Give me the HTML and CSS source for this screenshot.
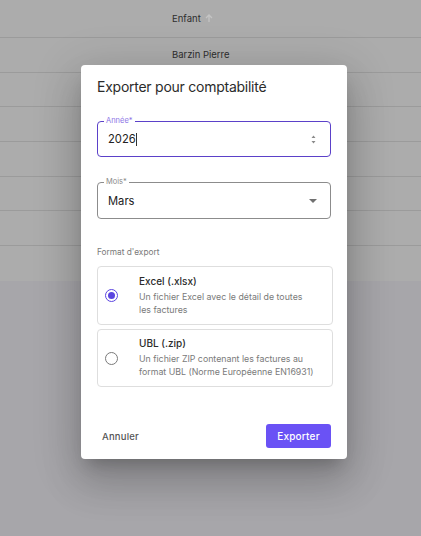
FILE: index.html
```html
<!DOCTYPE html>
<html lang="fr">
<head>
<meta charset="utf-8">
<title>Exporter</title>
<link rel="stylesheet" href="styles.css">
</head>
<body>
<div class="page">
  <div class="table">
    <div class="row head"><span>Enfant</span><svg class="sort" width="8" height="9" viewBox="0 0 8 9"><path d="M4 1 L4 8 M1 4 L4 1 L7 4" stroke="#c4c4c4" stroke-width="1.3" fill="none"/></svg></div>
    <div class="row"><span>Barzin Pierre</span></div>
    <div class="row"></div>
    <div class="row"></div>
    <div class="row"></div>
    <div class="row"></div>
    <div class="row"></div>
    <div class="row last"></div>
  </div>
</div>

<div class="modal">
  <h2 class="title">Exporter pour comptabilité</h2>

  <div class="field focused">
    <span class="flabel">Année*</span>
    <span class="value">2026<i class="caret"></i></span>
    <svg class="spin" width="5" height="9" viewBox="0 0 5 9"><path d="M2.5 0.5 L4.5 3 L0.5 3 Z M2.5 8.5 L4.5 6 L0.5 6 Z" fill="#8a8a8a"/></svg>
  </div>

  <div class="field select">
    <span class="flabel">Mois*</span>
    <span class="value">Mars</span>
    <svg class="drop" width="8" height="4" viewBox="0 0 8 4"><path d="M0 0 L8 0 L4 4 Z" fill="#707070"/></svg>
  </div>

  <div class="section">Format d'export</div>

  <div class="options">
    <div class="option">
      <span class="radio checked"><i></i></span>
      <div class="otext">
        <div class="otitle">Excel (.xlsx)</div>
        <div class="odesc">Un fichier Excel avec le détail de toutes<br>les factures</div>
      </div>
    </div>
    <div class="option">
      <span class="radio"></span>
      <div class="otext">
        <div class="otitle">UBL (.zip)</div>
        <div class="odesc">Un fichier ZIP contenant les factures au<br>format UBL (Norme Européenne EN16931)</div>
      </div>
    </div>
  </div>

  <div class="footer">
    <button class="btn-text">Annuler</button>
    <button class="btn-primary">Exporter</button>
  </div>
</div>
</body>
</html>
```
FILE: styles.css
```css
* { box-sizing: border-box; }
html, body { margin: 0; padding: 0; }
body {
  width: 421px;
  height: 536px;
  overflow: hidden;
  background: #a7a6aa;
  font-family: Inter, "Noto Sans", sans-serif;
}
.page { width: 421px; }
.table { background: #acacac; }
.row {
  height: 34.7px;
  border-bottom: 1px solid #9b9b9b;
  display: flex;
  align-items: center;
  justify-content: flex-start;
  font-size: 9.5px;
  color: #2e2e2e;
  gap: 4px;
  padding-left: 172px;
}
.row.head { height: 38px; }
.row.last { border-bottom: none; }
.sort { margin-top: -1px; }

.modal {
  position: absolute;
  left: 81px;
  top: 65px;
  width: 266px;
  height: 394px;
  background: #fff;
  border-radius: 4px;
  box-shadow: 0 11px 15px -7px rgba(0,0,0,0.2), 0 24px 38px 3px rgba(0,0,0,0.14), 0 9px 46px 8px rgba(0,0,0,0.12);
  padding: 12px 16px 11px 16px;
  display: flex;
  flex-direction: column;
}
.title {
  margin: 0;
  font-size: 14px;
  font-weight: 400;
  line-height: 20px;
  color: #2b2b2b;
  letter-spacing: -0.25px;
}
.field {
  position: relative;
  height: 37px;
  border: 1px solid #8c8c8c;
  border-radius: 4px;
  display: flex;
  align-items: center;
  padding: 0 11px 0 10px;
  margin-top: 24px;
}
.field.focused {
  border: 1.5px solid #5b41c9;
  height: 36px;
}
.field.select { margin-top: 25px; }
.flabel {
  position: absolute;
  top: -6px;
  left: 6px;
  padding: 0 2px;
  background: #fff;
  font-size: 7.5px;
  line-height: 10px;
  color: #8a8a8a;
}
.focused .flabel { color: #8c74e6; top: -6.5px; }
.value {
  font-size: 11.2px;
  color: #222;
  flex: 1;
  display: flex;
  align-items: center;
}
.caret {
  display: inline-block;
  width: 1px;
  height: 13px;
  background: #333;
  margin-left: 0.5px;
}
.spin { margin-right: 3px; }
.drop { margin-right: 2px; }

.section {
  margin-top: 27px;
  font-size: 8.3px;
  line-height: 12px;
  color: #7a7a7a;
}
.options {
  margin-top: 8px;
  display: flex;
  flex-direction: column;
  gap: 4px;
  margin-right: -2px;
}
.option {
  border: 1px solid #dedede;
  border-radius: 4px;
  display: flex;
  align-items: center;
  height: 59px;
  padding: 0 8px 0 7px;
}
.option + .option { height: 58px; }
.radio {
  width: 13px;
  height: 13px;
  border-radius: 50%;
  border: 1.2px solid #7a7a7a;
  flex: none;
  margin-right: 21px;
  display: flex;
  align-items: center;
  justify-content: center;
}
.radio.checked { border-color: #5b45e0; }
.radio.checked i {
  width: 7px;
  height: 7px;
  border-radius: 50%;
  background: #5b45e0;
}
.otext { margin-top: -2px; }
.otitle {
  font-size: 10px;
  font-weight: 500;
  color: #2b2b2b;
  line-height: 14px;
  margin-bottom: 2px;
}
.odesc {
  font-size: 8.8px;
  line-height: 13px;
  color: #7a7a7a;
  white-space: nowrap;
}
.footer {
  margin-top: auto;
  display: flex;
  justify-content: space-between;
  align-items: center;
}
button {
  font-family: inherit;
  border: none;
  cursor: pointer;
}
.btn-text {
  background: none;
  font-size: 9.5px;
  font-weight: 500;
  color: #555;
  padding: 0 5px;
  letter-spacing: 0.2px;
}
.btn-primary {
  background: #6a52f5;
  color: #fff;
  font-size: 10px;
  font-weight: 500;
  width: 65px;
  height: 24px;
  border-radius: 3px;
  letter-spacing: 0.2px;
}
```
